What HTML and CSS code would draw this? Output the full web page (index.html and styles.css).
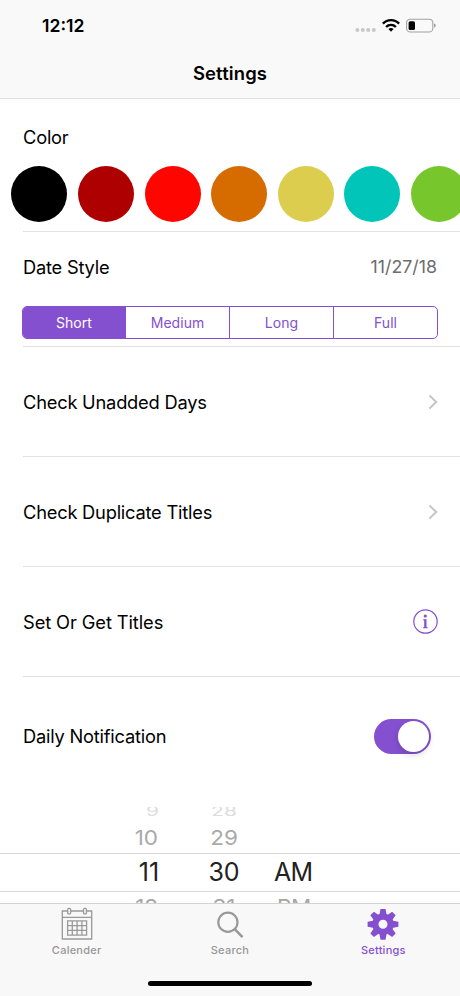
FILE: index.html
```html
<!DOCTYPE html>
<html lang="en">
<head>
<meta charset="utf-8">
<title>Settings</title>
<link rel="stylesheet" href="styles.css">
</head>
<body>
<div class="screen">
  <header class="header">
    <div class="status">
      <span class="clock">12:12</span>
      <svg class="status-icons" width="82" height="16" viewBox="0 0 82 16">
        <g fill="#c8c8c9"><circle cx="2.4" cy="12" r="2"/><circle cx="7.8" cy="12" r="2"/><circle cx="13.2" cy="12" r="2"/><circle cx="18.8" cy="12" r="2"/></g>
        <g fill="none" stroke="#000" stroke-width="2.4"><path d="M27.9 5.6a11.2 11.2 0 0 1 16.2 0"/><path d="M31.1 9a6.8 6.8 0 0 1 9.8 0"/></g>
        <path d="M36 13.8l-2.6-2.7a3.8 3.8 0 0 1 5.2 0z"/>
        <rect x="51.6" y="1.2" width="26.2" height="12.8" rx="3.6" fill="none" stroke="#a2a2a3" stroke-width="1.1"/>
        <rect x="53.6" y="3.2" width="6.4" height="8.8" rx="1.6"/>
        <path d="M79 5.4q1.8.6 1.8 2.2t-1.8 2.2z" fill="#a2a2a3"/>
      </svg>
    </div>
    <h1 class="title">Settings</h1>
  </header>
  <main class="content">
    <section class="row color-row">
      <h2 class="label">Color</h2>
      <div class="swatches">
        <span class="swatch black"></span><span class="swatch maroon"></span><span class="swatch red"></span><span class="swatch orange"></span><span class="swatch yellow"></span><span class="swatch teal"></span><span class="swatch green"></span>
      </div>
    </section>
    <section class="row date-row">
      <div class="date-head"><span class="label">Date Style</span><span class="date">11/27/18</span></div>
      <div class="segments">
        <span class="segment active">Short</span><span class="segment">Medium</span><span class="segment">Long</span><span class="segment">Full</span>
      </div>
    </section>
    <section class="row link-row">
      <span class="label">Check Unadded Days</span>
      <svg class="chevron" width="10" height="16" viewBox="0 0 10 16"><path d="M1.4 1.4L8.2 8l-6.8 6.6"/></svg>
    </section>
    <section class="row link-row">
      <span class="label">Check Duplicate Titles</span>
      <svg class="chevron" width="10" height="16" viewBox="0 0 10 16"><path d="M1.4 1.4L8.2 8l-6.8 6.6"/></svg>
    </section>
    <section class="row link-row">
      <span class="label wide">Set Or Get Titles</span>
      <svg class="info" width="25" height="26" viewBox="0.5 0.5 25 26"><circle cx="13" cy="13" r="11.7" fill="none" stroke="#8450d0" stroke-width="1.2"/><circle cx="12.8" cy="7.5" r="1.6" fill="#8450d0"/><path d="M10.4 10.9l3.6-.5v8.2l1.2.4v.7h-4.7V19l1.2-.4v-6.7l-1.3-.3z" fill="#8450d0"/></svg>
    </section>
    <section class="notify-row">
      <span class="label">Daily Notification</span>
      <span class="switch"><span class="knob"></span></span>
    </section>
    <section class="picker">
      <div class="wheel far"><span class="hour">9</span><span class="minute">28</span><span></span></div>
      <div class="wheel near"><span class="hour">10</span><span class="minute">29</span><span></span></div>
      <div class="wheel selected"><span class="hour">11</span><span class="minute">30</span><span class="period">AM</span></div>
      <div class="wheel next"><span class="hour">12</span><span class="minute">31</span><span class="period">PM</span></div>
    </section>
  </main>
  <nav class="tabs">
    <div class="tab-list">
      <div class="tab">
        <svg width="34" height="36" viewBox="0 0 34 36" fill="none" stroke="#999" stroke-width="1.3">
          <path d="M7.6 6H2.3v28h29.4V6h-5.2M10.6 6h12.9M2.3 12.3h29.4"/>
          <rect x="7.7" y="3.3" width="2.9" height="5.6" rx="1"/><rect x="23.5" y="3.3" width="2.9" height="5.6" rx="1"/>
          <path d="M7.6 15.9h19v14.3h-19zM12.3 15.9v14.3M17.1 15.9v14.3M21.9 15.9v14.3M7.6 20.7h19M7.6 25.4h19"/>
        </svg>
        <span>Calender</span>
      </div>
      <div class="tab">
        <svg width="34" height="36" viewBox="0 0 34 36" fill="none" stroke="#999"><circle cx="14.9" cy="17.2" r="9.6" stroke-width="2.2"/><path d="M21.7 24.2l7.8 7.9" stroke-width="2.6"/></svg>
        <span>Search</span>
      </div>
      <div class="tab current">
        <svg width="34" height="36" viewBox="0 0 34 36" fill="#8450d0">
          <defs><path id="tooth" d="M13.3 10.4l1.2-6.5h5l1.2 6.5z"/></defs>
          <circle cx="17" cy="19.3" r="7.6" fill="none" stroke="#8450d0" stroke-width="6.2"/>
          <use href="#tooth"/><use href="#tooth" transform="rotate(45 17 19.3)"/><use href="#tooth" transform="rotate(90 17 19.3)"/><use href="#tooth" transform="rotate(135 17 19.3)"/><use href="#tooth" transform="rotate(180 17 19.3)"/><use href="#tooth" transform="rotate(225 17 19.3)"/><use href="#tooth" transform="rotate(270 17 19.3)"/><use href="#tooth" transform="rotate(315 17 19.3)"/>
        </svg>
        <span>Settings</span>
      </div>
    </div>
    <div class="home-bar"></div>
  </nav>
</div>
</body>
</html>
```

FILE: styles.css
```css
* { box-sizing: border-box; }
body { margin: 0; background: #fff; color: #000; font-family: Inter, "Liberation Sans", sans-serif; }
.screen { width: 460px; height: 996px; display: flex; flex-direction: column; overflow: hidden; }
.header { height: 99px; flex: none; background: #f9f9f9; border-bottom: 1px solid #dfdfe0; }
.status { height: 50px; display: flex; justify-content: space-between; align-items: center; padding: 1px 23px 0 42px; }
.clock { font-size: 17.6px; font-weight: 600; letter-spacing: 0; }
.status-icons { display: block; }
.title { margin: 0; height: 48px; line-height: 47px; text-align: center; font-size: 18.4px; font-weight: 600; letter-spacing: 0.15px; }
.content { height: 804px; flex: none; overflow: hidden; }
.label { margin: 0; font-size: 18.3px; font-weight: 400; line-height: 24px; letter-spacing: -0.22px; white-space: nowrap; }
.wide { letter-spacing: -0.1px; }
.row { margin-left: 23px; border-bottom: 1px solid #e3e3e5; }
.color-row { height: 133px; padding-top: 26px; }
.swatches { display: flex; gap: 10.6px; margin: 17px 0 0 -11.7px; overflow: hidden; }
.swatch { width: 56px; height: 56px; flex: none; border-radius: 50%; }
.black { background: #000; }
.maroon { background: #ae0000; }
.red { background: #ff0500; }
.orange { background: #d66c00; }
.yellow { background: #dccd4e; }
.teal { background: #00c5b8; }
.green { background: #76c62c; }
.date-row { height: 115px; padding: 23px 22px 0 0; }
.date-head { display: flex; justify-content: space-between; align-items: center; }
.date { font-size: 17.8px; line-height: 24px; color: #6d6d6d; letter-spacing: 0; margin-right: 1px; }
.segments { display: grid; grid-template-columns: 102px 104px 104px 1fr; height: 33px; margin: 27px 0 0 -1px; border: 1px solid #8450d0; border-radius: 5px; overflow: hidden; }
.segment { display: flex; align-items: center; justify-content: center; color: #8450d0; font-size: 14px; letter-spacing: .05px; border-left: 1px solid #8450d0; }
.segment.active { background: #8450d0; color: #fff; border-left: 0; }
.link-row { height: 110px; display: flex; align-items: center; justify-content: space-between; padding-right: 22px; }
.chevron { fill: none; stroke: #c4c4c7; stroke-width: 2; }
.notify-row { height: 118px; display: flex; align-items: center; justify-content: space-between; padding: 0 29px 0 23px; }
.switch { width: 57px; height: 35px; padding: 2px; border-radius: 18px; background: #8450d0; display: flex; justify-content: flex-end; }
.knob { width: 31px; height: 31px; border-radius: 50%; background: #fff; box-shadow: 0 3px 7px rgba(0,0,0,.15); }
.picker { padding-top: 12px; }
.wheel { display: grid; grid-template-columns: 159px 45px 40px 31px auto; align-items: center; overflow: hidden; white-space: nowrap; font-size: 23px; }
.hour { grid-column: 1; text-align: right; }
.minute { grid-column: 3; text-align: center; }
.period { grid-column: 5; }
.far { height: 11px; color: #ddd; font-size: 21px; line-height: 11px; }
.far span { transform: translateY(-1px) scaleY(.6); }
.near { height: 35px; color: #aaa; font-size: 22.5px; padding-top: 3px; }
.near .hour { padding-right: 1px; }
.near span { transform: scaleY(.9); }
.selected { height: 39px; border: solid #d8d8da; border-width: 1px 0; color: #222; font-size: 25px; line-height: 35px; padding-bottom: 1px; letter-spacing: -.1px; }
.selected .period { letter-spacing: -.7px; padding-left: 0; margin-left: -1px; }
.next { height: 12px; color: #a6a6a6; font-size: 22.5px; line-height: 29px; align-items: start; }
.next .hour { padding-right: 1px; }
.next .period { padding-left: 2px; letter-spacing: -.4px; }
.next span { transform: scaleY(.9); }
.tabs { height: 93px; flex: none; background: #f8f8f8; border-top: 1px solid #d3d3d4; }
.tab-list { display: grid; grid-template-columns: repeat(3, 1fr); height: 79px; }
.tab { display: flex; flex-direction: column; align-items: center; color: #979797; font-size: 11px; font-weight: 500; letter-spacing: .25px; padding-top: 1px; }
.tab svg { display: block; }
.tab span { line-height: 16px; margin-top: 1px; }
.current { color: #8450d0; }
.home-bar { width: 164px; height: 5px; margin: -2px auto 0; border-radius: 3px; background: #000; }
```
